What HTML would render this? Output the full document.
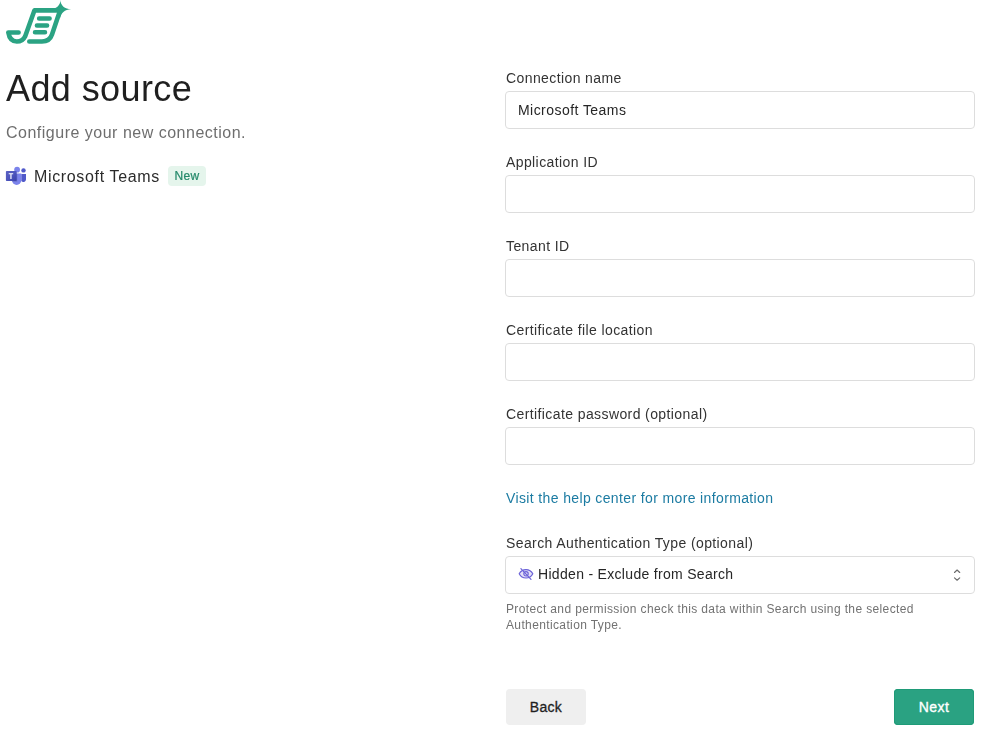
<!DOCTYPE html>
<html>
<head>
<meta charset="utf-8">
<style>
html,body{margin:0;padding:0;background:#fff;width:985px;height:739px;overflow:hidden;}
body{font-family:"Liberation Sans",sans-serif;color:#222;position:relative;}
.a{position:absolute;white-space:nowrap;will-change:transform;}
.h1{left:6px;top:66.5px;font-size:36px;line-height:44px;color:#1f1f1f;letter-spacing:0.41px;}
.sub{left:6px;top:122.6px;font-size:16px;line-height:20px;color:#6e6e6e;letter-spacing:0.5px;}
.ms{left:34px;top:166.5px;font-size:16px;line-height:20px;color:#2b2b2b;letter-spacing:0.65px;}
.badge{left:168px;top:166px;width:38px;height:20px;border-radius:4px;background:#e5f5ec;}
.badge span{position:absolute;left:0;right:0;top:0;text-align:center;font-size:12px;line-height:20px;color:#24896a;letter-spacing:0.3px;-webkit-text-stroke:0.22px #24896a;}
.lbl{left:506px;font-size:14px;line-height:20px;color:#333;letter-spacing:0.4px;}
.inp{left:505px;width:468px;height:36px;border:1px solid #dddddd;border-radius:4px;background:#fff;}
.val{left:518px;top:100.2px;font-size:14px;line-height:20px;color:#262626;letter-spacing:0.45px;}
.link{left:506px;top:487.7px;font-size:14px;line-height:20px;color:#1b7ba2;letter-spacing:0.37px;}
.help{left:506px;top:600.5px;font-size:12px;line-height:16px;color:#727272;letter-spacing:0.37px;}
.btn{top:689px;width:80px;height:36px;border-radius:4px;will-change:auto;}
.btn span{position:absolute;left:0;right:0;top:8px;text-align:center;font-size:14px;line-height:20px;}
</style>
</head>
<body>
<!-- logo -->
<svg class="a" style="left:0;top:0" width="80" height="50" viewBox="0 0 80 50">
  <g fill="none" stroke="#2ba383" stroke-width="4.6" stroke-linecap="round" stroke-linejoin="round">
    <path d="M18.6 32.45 L8.3 32.45 C9.2 38.2 12.4 41.5 16.8 41.5 C21.3 41.5 23.8 39.2 25.2 36.2 L34.4 10.4 L59.8 10.4"/>
    <path d="M29.3 41.5 L42 41.5 C47.3 41.5 50.5 39 52 34.5 L59.9 11"/>
    <path d="M39.1 18.5 L49.6 18.5 M36.9 25.5 L47.1 25.5 M35 32.3 L45 32.3" stroke-width="4.5"/>
  </g>
  <path fill="#2ba383" d="M60.45 0.0 C60.45 5.39 64.90 9.3 71.05 9.3 C64.90 9.3 60.45 13.21 60.45 18.6 C60.45 13.21 56.00 9.3 49.85 9.3 C56.00 9.3 60.45 5.39 60.45 0.0 Z"/>
</svg>

<div class="a h1">Add source</div>
<div class="a sub">Configure your new connection.</div>

<!-- teams icon -->
<svg class="a" style="left:0;top:160px" width="30" height="30" viewBox="0 0 30 30">
  <circle cx="23.5" cy="10.4" r="2.2" fill="#5059c9"/>
  <path d="M21.3 14 H26 V19.6 A2.6 2.6 0 0 1 21.3 21 Z" fill="#5059c9"/>
  <circle cx="17.1" cy="9.7" r="2.9" fill="#7b83eb"/>
  <path d="M12 13.4 H21.3 V20.3 A4.65 4.65 0 0 1 12 20.3 Z" fill="#7b83eb"/>
  <defs><linearGradient id="tg" x1="0" y1="0" x2="1" y2="1"><stop offset="0" stop-color="#5a62c3"/><stop offset="0.5" stop-color="#4d55bd"/><stop offset="1" stop-color="#3940ab"/></linearGradient></defs>
  <rect x="12" y="13.4" width="5.3" height="8.3" rx="0.6" fill="#000" opacity="0.13"/>
  <rect x="5.9" y="11" width="10.8" height="10" rx="0.8" fill="url(#tg)"/>
  <path d="M8.7 13.2 H13.2 V14.3 H11.55 V18.9 H10.35 V14.3 H8.7 Z" fill="#fff"/>
</svg>
<div class="a ms">Microsoft Teams</div>
<div class="a badge"><span>New</span></div>

<!-- form -->
<div class="a lbl" style="top:68px">Connection name</div>
<div class="a inp" style="top:91px"></div>
<div class="a val">Microsoft Teams</div>

<div class="a lbl" style="top:152px">Application ID</div>
<div class="a inp" style="top:175px"></div>

<div class="a lbl" style="top:236px">Tenant ID</div>
<div class="a inp" style="top:259px"></div>

<div class="a lbl" style="top:320px">Certificate file location</div>
<div class="a inp" style="top:343px"></div>

<div class="a lbl" style="top:404px">Certificate password (optional)</div>
<div class="a inp" style="top:427px"></div>

<div class="a link">Visit the help center for more information</div>

<div class="a lbl" style="top:532.7px">Search Authentication Type (optional)</div>
<div class="a inp" style="top:556px"></div>
<svg class="a" style="left:516px;top:565px" width="20" height="18" viewBox="0 0 20 18">
  <g fill="none" stroke="#6b62d8" stroke-width="1.2" stroke-linecap="round" stroke-linejoin="round">
    <path d="M3.2 8.8 C5 5.3 7.8 4.6 10 4.6 C12.2 4.6 15 5.3 16.8 8.8 C15 12.3 12.2 13 10 13 C7.8 13 5 12.3 3.2 8.8 Z" fill="#e4e1f7"/>
    <circle cx="10" cy="8.8" r="2.2"/>
    <path d="M4.9 3.6 L15 14.4"/>
  </g>
</svg>
<div class="a val" style="left:537.5px;top:564.2px;letter-spacing:0.31px">Hidden - Exclude from Search</div>
<svg class="a" style="left:950px;top:566px" width="14" height="18" viewBox="0 0 14 18">
  <g fill="none" stroke="#6a6a6a" stroke-width="1.15" stroke-linecap="round" stroke-linejoin="round">
    <path d="M4.5 6.5 L7.1 4.0 L9.7 6.5"/>
    <path d="M4.5 11.9 L7.1 14.2 L9.7 11.9"/>
  </g>
</svg>
<div class="a help">Protect and permission check this data within Search using the selected<br>Authentication Type.</div>

<div class="a btn" style="left:506px;background:#efefef"><span style="color:#1f1f1f;letter-spacing:0.3px;-webkit-text-stroke:0.3px #1f1f1f;padding-left:0px">Back</span></div>
<div class="a btn" style="left:894px;background:#2aa282;box-shadow:inset 0 0 0 1px #1f9b78"><span style="color:#fff;letter-spacing:0.45px;-webkit-text-stroke:0.35px #fff">Next</span></div>
</body>
</html>
